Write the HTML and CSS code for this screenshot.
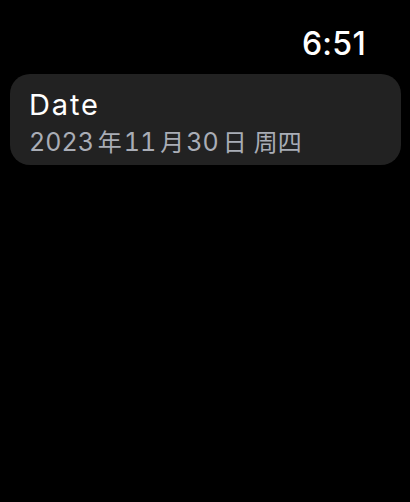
FILE: index.html
```html
<!DOCTYPE html>
<html lang="zh-CN">
<head>
<meta charset="utf-8">
<link rel="stylesheet" href="styles.css">
</head>
<body>
<div class="screen">
  <header class="status">
    <span class="time">6:51</span>
  </header>
  <div class="card">
    <div class="title">Date</div>
    <div class="value">2023<span class="cjk">年</span>11<span class="cjk">月</span>30<span class="cjk">日</span><span class="sp"> </span><span class="cjk tail">周四</span></div>
  </div>
</div>
</body>
</html>
```
FILE: styles.css
```css
html, body {
  margin: 0;
  padding: 0;
  background: #000;
}
.screen {
  width: 410px;
  height: 502px;
  background: #000;
  font-family: Inter, "Noto Sans CJK SC", sans-serif;
  padding: 0 9px 0 10px;
  box-sizing: border-box;
  display: flex;
  flex-direction: column;
}
.status {
  display: flex;
  justify-content: flex-end;
  height: 74px;
  padding-right: 35px;
  box-sizing: border-box;
}
.time {
  color: #fff;
  font-size: 32px;
  font-weight: 500;
  line-height: 1;
  margin-top: 28px;
  letter-spacing: 0.3px;
}
.card {
  background: #222222;
  border-radius: 20px;
  height: 91px;
  box-sizing: border-box;
  padding: 14px 19px 0 19px;
}
.title {
  color: #fff;
  font-size: 29px;
  line-height: 34px;
  letter-spacing: 1.9px;
}
.value {
  color: #a9adb6;
  font-size: 25px;
  line-height: 34px;
  margin-top: 2px;
  letter-spacing: 0;
  font-variant-numeric: tabular-nums;
  white-space: nowrap;
}
.cjk {
  font-family: "Noto Sans CJK SC", sans-serif;
  font-size: 24px;
  letter-spacing: 0;
  margin: 0 2px 0 4px;
}
.sp {
  display: inline-block;
  width: 5px;
}
.tail {
  margin: 0;
}
```
